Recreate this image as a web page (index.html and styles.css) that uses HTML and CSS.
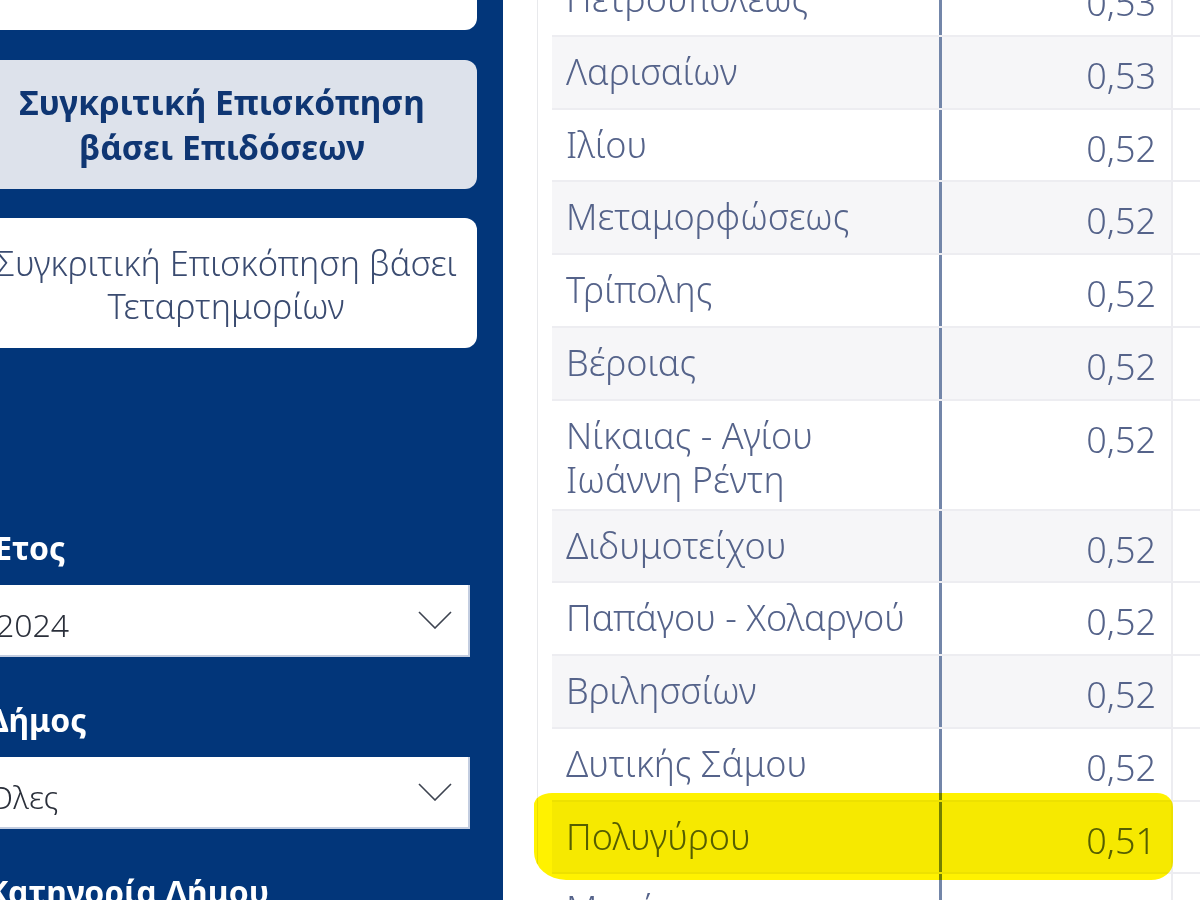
FILE: index.html
```html
<!DOCTYPE html>
<html lang="el">
<head>
<meta charset="utf-8">
<title>Συγκριτική Επισκόπηση</title>
<link rel="stylesheet" href="styles.css">
</head>
<body>
<div class="page">
  <aside class="sidebar">
    <div class="sidebar-inner">
      <div class="card card-top"></div>
      <div class="card card-active">Συγκριτική Επισκόπηση<br>βάσει Επιδόσεων</div>
      <div class="card card-plain">Συγκριτική Επισκόπηση βάσει<br>Τεταρτημορίων</div>

      <div class="filter-label first">Έτος</div>
      <div class="dropdown">
        <span class="dropdown-value">2024</span>
        <svg class="chevron" width="34" height="18" viewBox="0 0 34 18"><polyline points="1,1 17,17 33,1" fill="none" stroke="#3d4350" stroke-width="1.6"/></svg>
      </div>

      <div class="filter-label">Δήμος</div>
      <div class="dropdown">
        <span class="dropdown-value tonos">Όλες</span>
        <svg class="chevron" width="34" height="18" viewBox="0 0 34 18"><polyline points="1,1 17,17 33,1" fill="none" stroke="#3d4350" stroke-width="1.6"/></svg>
      </div>

      <div class="filter-label">Κατηγορία Δήμου</div>
    </div>
  </aside>

  <main class="main">
    <div class="visual">
      <div class="table">
        <div class="row"><div class="cell name">Πετρουπόλεως</div><div class="cell value">0,53</div><div class="cell rest"></div></div>
        <div class="row"><div class="cell name">Λαρισαίων</div><div class="cell value">0,53</div><div class="cell rest"></div></div>
        <div class="row"><div class="cell name">Ιλίου</div><div class="cell value">0,52</div><div class="cell rest"></div></div>
        <div class="row"><div class="cell name">Μεταμορφώσεως</div><div class="cell value">0,52</div><div class="cell rest"></div></div>
        <div class="row"><div class="cell name">Τρίπολης</div><div class="cell value">0,52</div><div class="cell rest"></div></div>
        <div class="row"><div class="cell name">Βέροιας</div><div class="cell value">0,52</div><div class="cell rest"></div></div>
        <div class="row"><div class="cell name">Νίκαιας - Αγίου Ιωάννη Ρέντη</div><div class="cell value">0,52</div><div class="cell rest"></div></div>
        <div class="row"><div class="cell name">Διδυμοτείχου</div><div class="cell value">0,52</div><div class="cell rest"></div></div>
        <div class="row"><div class="cell name">Παπάγου - Χολαργού</div><div class="cell value">0,52</div><div class="cell rest"></div></div>
        <div class="row"><div class="cell name">Βριλησσίων</div><div class="cell value">0,52</div><div class="cell rest"></div></div>
        <div class="row"><div class="cell name">Δυτικής Σάμου</div><div class="cell value">0,52</div><div class="cell rest"></div></div>
        <div class="row"><div class="cell name">Πολυγύρου</div><div class="cell value">0,51</div><div class="cell rest"></div></div>
        <div class="row"><div class="cell name">Μυκόνου</div><div class="cell value">0,51</div><div class="cell rest"></div></div>
      </div>
    </div>
    <div class="highlight"></div>
  </main>
</div>
</body>
</html>
```

FILE: styles.css
```css
html, body {
  margin: 0;
  padding: 0;
  width: 1200px;
  height: 900px;
  overflow: hidden;
  background: #ffffff;
  font-family: "Noto Sans", "Open Sans", "DejaVu Sans", sans-serif;
}

.page {
  display: flex;
  width: 1200px;
  height: 900px;
}

/* ---------- Sidebar ---------- */
.sidebar {
  width: 503px;
  flex: 0 0 503px;
  height: 900px;
  background: #02367a;
  overflow: hidden;
}

.sidebar-inner {
  margin-left: -33px;
  width: 536px;
  display: flex;
  flex-direction: column;
}

.card {
  width: 510px;
  box-sizing: border-box;
  border-radius: 12px;
  display: flex;
  align-items: center;
  justify-content: center;
  text-align: center;
  white-space: nowrap;
}

.card-top {
  height: 42px;
  margin-top: -12px;
  background: #ffffff;
}

.card-active {
  margin-top: 30px;
  height: 129px;
  background: #dde2eb;
  color: #0f3673;
  font-weight: 700;
  font-size: 33.5px;
  line-height: 45px;
  padding-top: 1px;
}

.card-plain {
  margin-top: 29px;
  height: 130px;
  background: #ffffff;
  color: #3a4b70;
  font-size: 34.5px;
  font-weight: 300;
  line-height: 43px;
  padding-top: 2px;
  padding-left: 8px;
}

.filter-label {
  margin-top: 43px;
  margin-left: 20px;
  color: #ffffff;
  font-weight: 700;
  font-size: 32px;
  line-height: 40px;
  white-space: nowrap;
}

.filter-label.first {
  margin-top: 180px;
}

.dropdown {
  margin-top: 17px;
  margin-left: 20px;
  width: 483px;
  height: 72px;
  box-sizing: border-box;
  background: #ffffff;
  border-right: 2px solid #c3cde0;
  border-bottom: 2px solid #c3cde0;
  display: flex;
  align-items: center;
  justify-content: space-between;
  padding-left: 9px;
  padding-right: 16px;
}

.dropdown-value {
  font-size: 32px;
  font-weight: 300;
  color: #2a2f3a;
  padding-top: 8px;
}

.dropdown-value.tonos {
  margin-left: -10px;
}

.chevron {
  display: block;
}

/* ---------- Main / table ---------- */
.main {
  position: relative;
  flex: 1;
  height: 900px;
  padding-left: 34px;
  box-sizing: border-box;
  overflow: hidden;
}

.visual {
  height: 900px;
  border-left: 1px solid #e8e9ec;
  padding-left: 14px;
}

.table {
  margin-top: -36px;
  display: flex;
  flex-direction: column;
}

.row {
  display: flex;
  align-items: stretch;
  border-bottom: 2px solid #ededf1;
  background: #ffffff;
  color: #55638a;
  font-size: 36px;
  font-weight: 300;
}

.row:nth-child(even) .name,
.row:nth-child(even) .value {
  background: #f6f6f8;
}

.cell {
  box-sizing: border-box;
}

.name {
  width: 390px;
  flex: 0 0 390px;
  padding: 13px 14px 7px 14px;
  line-height: 44px;
  border-right: 3px solid #7386a9;
}

.value {
  width: 231px;
  flex: 0 0 231px;
  padding: 16px 15px 9.75px 0;
  line-height: 45px;
  text-align: right;
  border-right: 2px solid #ececf0;
}

.rest {
  flex: 1;
}

.highlight {
  position: absolute;
  left: 31px;
  top: 793px;
  width: 639px;
  height: 87px;
  background: #fff200;
  mix-blend-mode: multiply;
  border-radius: 18px 16px 22px 32px / 12px 14px 18px 28px;
}
```
